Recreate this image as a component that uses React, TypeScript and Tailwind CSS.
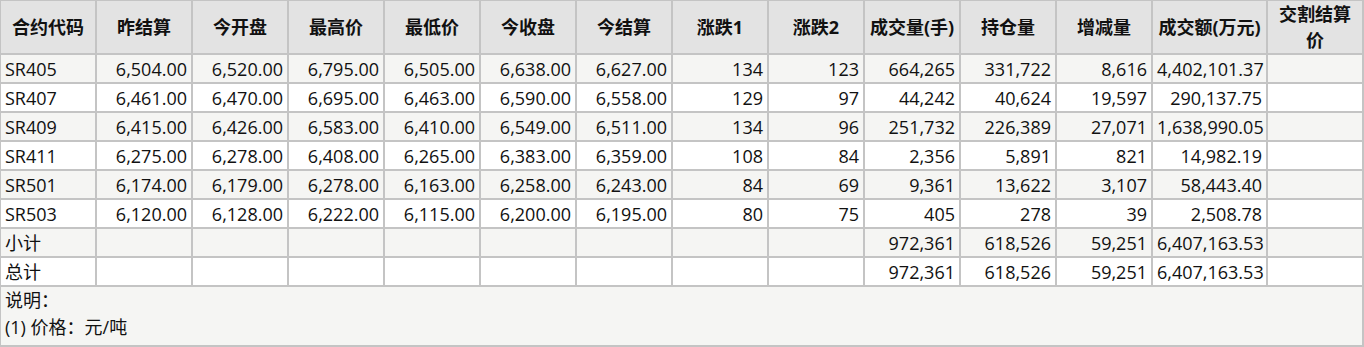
const headers = [
  "合约代码",
  "昨结算",
  "今开盘",
  "最高价",
  "最低价",
  "今收盘",
  "今结算",
  "涨跌1",
  "涨跌2",
  "成交量(手)",
  "持仓量",
  "增减量",
  "成交额(万元)",
  "交割结算价",
];

const rows: string[][] = [
  ["SR405", "6,504.00", "6,520.00", "6,795.00", "6,505.00", "6,638.00", "6,627.00", "134", "123", "664,265", "331,722", "8,616", "4,402,101.37", ""],
  ["SR407", "6,461.00", "6,470.00", "6,695.00", "6,463.00", "6,590.00", "6,558.00", "129", "97", "44,242", "40,624", "19,597", "290,137.75", ""],
  ["SR409", "6,415.00", "6,426.00", "6,583.00", "6,410.00", "6,549.00", "6,511.00", "134", "96", "251,732", "226,389", "27,071", "1,638,990.05", ""],
  ["SR411", "6,275.00", "6,278.00", "6,408.00", "6,265.00", "6,383.00", "6,359.00", "108", "84", "2,356", "5,891", "821", "14,982.19", ""],
  ["SR501", "6,174.00", "6,179.00", "6,278.00", "6,163.00", "6,258.00", "6,243.00", "84", "69", "9,361", "13,622", "3,107", "58,443.40", ""],
  ["SR503", "6,120.00", "6,128.00", "6,222.00", "6,115.00", "6,200.00", "6,195.00", "80", "75", "405", "278", "39", "2,508.78", ""],
  ["小计", "", "", "", "", "", "", "", "", "972,361", "618,526", "59,251", "6,407,163.53", ""],
  ["总计", "", "", "", "", "", "", "", "", "972,361", "618,526", "59,251", "6,407,163.53", ""],
];

const widths = [
  "w-[96px]", "w-[96px]", "w-[96px]", "w-[96px]", "w-[96px]", "w-[96px]", "w-[96px]",
  "w-[96px]", "w-[96px]", "w-[96px]", "w-[96px]", "w-[96px]", "w-[115px]", "w-[96px]",
];

export default function App() {
  return (
    <div className="w-[1364px] bg-white font-['Open_Sans','Noto_Sans_CJK_SC',sans-serif] text-[18px] text-[#111]">
      <table className="w-[1364px] table-fixed border-separate border-spacing-0 border-t border-l border-[#c4c4c4]">
        <colgroup>
          {widths.map((w, i) => (
            <col key={i} className={w} />
          ))}
        </colgroup>
        <thead>
          <tr>
            {headers.map((h) => (
              <th
                key={h}
                className="h-[54px] bg-[#e3e3e3] border-r-2 border-b-2 border-[#c4c4c4] px-1 text-center align-middle font-bold leading-[26px]"
              >
                {h}
              </th>
            ))}
          </tr>
        </thead>
        <tbody>
          {rows.map((row, r) => (
            <tr key={r} className={r % 2 === 0 ? "bg-[#f5f5f3]" : "bg-white"}>
              {row.map((cell, c) => (
                <td
                  key={c}
                  className={`h-[29px] border-r-2 border-b-2 border-[#c4c4c4] px-1 align-middle leading-[26px] whitespace-nowrap ${
                    c === 0 ? "text-left" : "text-right"
                  }`}
                >
                  {cell}
                </td>
              ))}
            </tr>
          ))}
          <tr>
            <td
              colSpan={14}
              className="h-[60px] bg-[#f5f5f3] border-r-2 border-b-2 border-[#c4c4c4] px-1 align-top leading-[27px]"
            >
              <div>说明：</div>
              <div>(1) 价格：元/吨</div>
            </td>
          </tr>
        </tbody>
      </table>
    </div>
  );
}
